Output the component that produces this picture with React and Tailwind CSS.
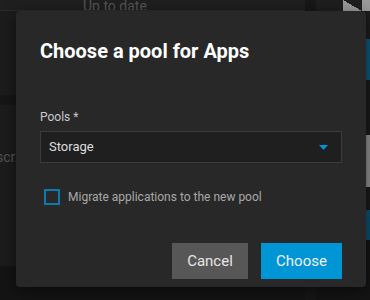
import { useState } from "react";

/* ================= BACKDROP (dimmed app behind the dialog) ================= */
const Backdrop = () => (
  <div className="flex h-[300px] w-[370px] bg-[#141414]">
    {/* main column */}
    <div className="flex w-[305px] flex-col">
      <div className="flex h-[11px] items-end overflow-hidden border-b border-[#2a2a2a] bg-[#1f1f1f] pl-[83px]">
        <span className="translate-y-[4px] text-[14px] leading-[16px] text-[#555555]">Up to date</span>
      </div>
      <div className="h-[84px] bg-[#1c1c1c]" />
      <div className="h-[10px] bg-[#161616]" />
      <div className="flex h-[161px] items-start bg-[#1c1c1c] pt-[44px]">
        <span className="-ml-[4px] text-[14px] leading-[16px] text-[#555555]">scr.</span>
      </div>
    </div>
    {/* right column */}
    <div className="w-[11px] bg-[#171717]" />
    <div className="flex flex-1 flex-col">
      <div className="flex h-[11px]">
        <div className="w-[27px] bg-[#1e1e1e]" />
        <div className="w-[19px] bg-[linear-gradient(to_bottom_left,#1e1e1e_50%,#9a9a9a_50%)]" />
        <div className="flex-1 bg-[#9a9a9a]" />
      </div>
      <div className="flex flex-1 justify-end">
        <div className="flex w-[4px] flex-col">
          <div className="h-[28px] bg-[#1c1c1c]" />
          <div className="h-[41px] bg-[#0d5578]" />
          <div className="h-[55px] bg-[#1a1a1a]" />
          <div className="h-[52px] bg-[#8c8c8c]" />
          <div className="h-[23px] bg-[#1a1a1a]" />
          <div className="h-[30px] bg-[#0d4e6e]" />
          <div className="flex-1 bg-[#141414]" />
        </div>
      </div>
    </div>
  </div>
);

/* ================= DIALOG ================= */
const PoolDialog = () => {
  const [migrate, setMigrate] = useState(false);

  return (
    <div className="absolute left-[16px] top-[11px] flex w-[350px] flex-col rounded-[4px] bg-[#282828] px-6 pb-2 pt-[26px] shadow-[0_4px_16px_rgba(0,0,0,0.5)]">
      <h2 className="h-[28px] text-[20px] font-bold leading-[28px] text-white">Choose a pool for Apps</h2>

      <label className="mt-[44px] text-[12px] leading-[16px] text-[#c8c8c8]">Pools *</label>
      <div className="mt-[6px] flex h-[32px] items-center justify-between border border-[#3b3b3b] bg-[#1f1f1f] pl-[8px] pr-[13px]">
        <span className="text-[13px] text-[#dedede]">Storage</span>
        <svg width="9" height="5" viewBox="0 0 9 5">
          <path d="M0 0h9L4.5 5z" fill="#0095d5" />
        </svg>
      </div>

      <button
        onClick={() => setMigrate(!migrate)}
        className="ml-[4px] mt-[26px] flex items-center gap-[8px] text-left"
      >
        <span className="h-[16px] w-[16px] border-2 border-[#0a7ab0]" />
        <span className="text-[12px] leading-[16px] text-[#a8a8a8]">Migrate applications to the new pool</span>
      </button>

      <div className="mt-[38px] flex justify-end gap-[13px]">
        <button className="h-[36px] w-[76px] bg-[#575757] text-[15px] text-[#e6e6e6]">Cancel</button>
        <button className="h-[36px] w-[81px] bg-[#0095d5] text-[15px] text-[#f0f0f0]">Choose</button>
      </div>
    </div>
  );
};

export default function App() {
  return (
    <div className="relative h-[300px] w-[370px] overflow-hidden font-['Roboto',sans-serif]">
      <Backdrop />
      <PoolDialog />
    </div>
  );
}
